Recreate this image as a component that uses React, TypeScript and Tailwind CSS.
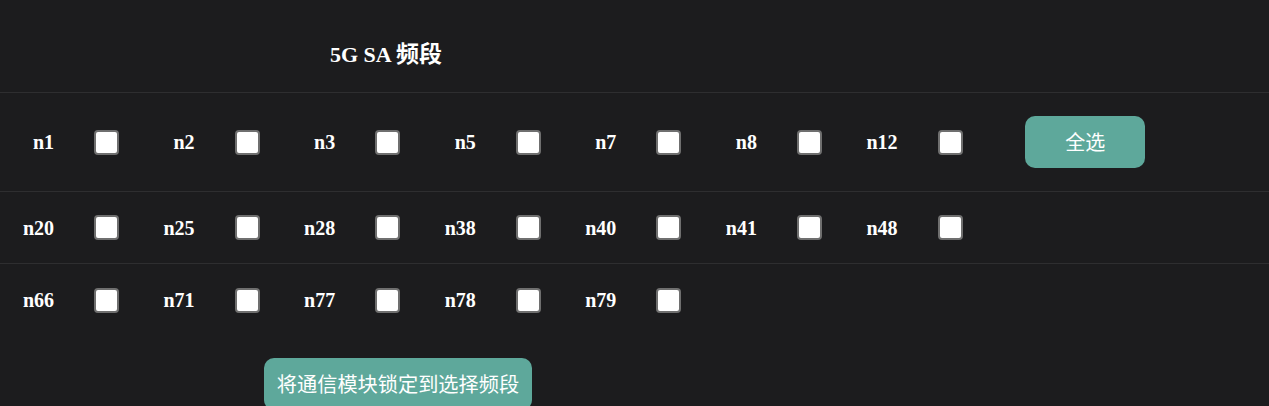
import React from "react";

const rows: string[][] = [
  ["n1", "n2", "n3", "n5", "n7", "n8", "n12"],
  ["n20", "n25", "n28", "n38", "n40", "n41", "n48"],
  ["n66", "n71", "n77", "n78", "n79"],
];

function Band({ name }: { name: string }) {
  return (
    <div className="flex w-[140.6px] shrink-0 items-center">
      <span
        className="w-[54px] text-right text-[20px] font-bold leading-none text-white"
        style={{ fontFamily: '"Liberation Serif", "Noto Sans CJK SC", serif' }}
      >
        {name}
      </span>
      <input
        type="checkbox"
        aria-label={name}
        className="ml-[40px] h-[25px] w-[25px] appearance-none rounded-[4px] border-2 border-[#6f6f6f] bg-white"
      />
    </div>
  );
}

export default function App() {
  return (
    <div
      className="h-[406px] w-full overflow-hidden bg-[#1c1c1e] text-white"
      style={{ fontFamily: '"Liberation Serif", "Noto Sans CJK SC", serif' }}
    >
      <div className="flex h-[92px] items-center pl-[330px] pt-[14px]">
        <h2 className="text-[22px] font-bold leading-none">
          5G SA{" "}
          <span className="text-[23px]" style={{ fontFamily: '"Noto Sans CJK SC", sans-serif' }}>
            频段
          </span>
        </h2>
      </div>
      <div className="border-t border-[#2e2e30]">
        <div className="flex h-[99px] items-center border-b border-[#2e2e30]">
          {rows[0].map((b) => (
            <Band key={b} name={b} />
          ))}
          <button
            className="ml-[41px] h-[52px] w-[120px] rounded-[10px] bg-[#5ea89b] text-[20px] text-white"
            style={{ fontFamily: '"Noto Sans CJK SC", sans-serif' }}
          >
            全选
          </button>
        </div>
        <div className="flex h-[72px] items-center border-b border-[#2e2e30]">
          {rows[1].map((b) => (
            <Band key={b} name={b} />
          ))}
        </div>
        <div className="flex h-[72px] items-center">
          {rows[2].map((b) => (
            <Band key={b} name={b} />
          ))}
        </div>
      </div>
      <div className="mt-[22px] pl-[264px]">
        <button
          className="h-[52px] w-[268px] rounded-[10px] bg-[#5ea89b] text-[20.2px] text-white"
          style={{ fontFamily: '"Noto Sans CJK SC", sans-serif' }}
        >
          将通信模块锁定到选择频段
        </button>
      </div>
    </div>
  );
}
